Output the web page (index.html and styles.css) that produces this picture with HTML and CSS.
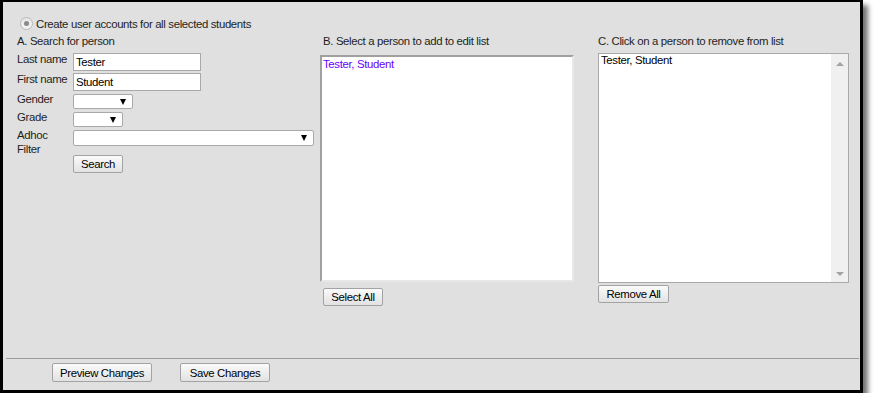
FILE: index.html
```html
<!DOCTYPE html>
<html>
<head>
<meta charset="utf-8">
<link rel="stylesheet" href="styles.css">
</head>
<body>
<div class="frame">
  <div class="main">
    <div class="radio-row">
      <span class="radio"><span class="dot"></span></span>
      <span class="radio-label">Create user accounts for all selected students</span>
    </div>
    <div class="cols">
      <div class="col col-a">
        <div class="heading">A. Search for person</div>
        <div class="frow r1"><span class="lbl lbl-in">Last name</span><span class="input">Tester</span></div>
        <div class="frow r2"><span class="lbl lbl-in">First name</span><span class="input">Student</span></div>
        <div class="frow r3"><span class="lbl lbl-sel">Gender</span><span class="select sel-gender"><span class="arrow"></span></span></div>
        <div class="frow r3"><span class="lbl lbl-sel">Grade</span><span class="select sel-grade"><span class="arrow"></span></span></div>
        <div class="frow r5"><span class="lbl lbl-sel">Adhoc<br>Filter</span><span class="select sel-adhoc"><span class="arrow"></span></span></div>
        <div class="frow r6"><span class="btn btn-search">Search</span></div>
      </div>
      <div class="col col-b">
        <div class="heading hb">B. Select a person to add to edit list</div>
        <div class="listbox-b"><div class="item-b">Tester, Student</div></div>
        <span class="btn btn-select">Select All</span>
      </div>
      <div class="col col-c">
        <div class="heading">C. Click on a person to remove from list</div>
        <div class="listbox-c">
          <div class="item-c">Tester, Student</div>
          <div class="scrollbar"><span class="up"></span><span class="down"></span></div>
        </div>
        <span class="btn btn-remove">Remove All</span>
      </div>
    </div>
  </div>
  <div class="footer">
    <span class="btn btn-preview">Preview Changes</span>
    <span class="btn btn-save">Save Changes</span>
  </div>
</div>
</body>
</html>
```

FILE: styles.css
```css
html, body {
  margin: 0;
  padding: 0;
  background: #ffffff;
}
body {
  font-family: "Liberation Sans", Arial, sans-serif;
  font-size: 11.4px;
  letter-spacing: -0.35px;
  color: #1e1e1e;
}
.frame {
  width: 863px;
  height: 393px;
  box-sizing: border-box;
  border: 3px solid #000;
  border-top-width: 2px;
  background: #e0e0e0;
  display: flex;
  flex-direction: column;
  box-shadow: 5px 5px 5px rgba(0, 0, 0, 0.55);
}
.main {
  height: 356px;
  box-sizing: border-box;
  padding-top: 14px;
}
.radio-row {
  display: flex;
  align-items: center;
  height: 15px;
  padding-left: 17px;
}
.radio {
  width: 11px;
  height: 11px;
  border-radius: 50%;
  border: 1px solid #b8b8b8;
  background: linear-gradient(#e6e6e6, #f4f4f4);
  display: flex;
  align-items: center;
  justify-content: center;
  margin-right: 3px;
}
.dot {
  width: 5px;
  height: 5px;
  border-radius: 50%;
  background: #8a8a8a;
}
.radio-label {
  line-height: 14px;
}
.cols {
  display: flex;
  margin-top: 3px;
}
.heading {
  line-height: 14px;
  height: 14px;
  white-space: nowrap;
}
.col-a {
  width: 317px;
  flex: none;
  padding-left: 14px;
  box-sizing: border-box;
}
.frow {
  display: flex;
  align-items: flex-start;
}
.r1 { height: 18px; margin-top: 5px; }
.r2 { height: 18px; margin-top: 2px; }
.r3 { height: 15px; margin-top: 3px; }
.r5 { height: 16px; margin-top: 3px; }
.r6 { height: 18px; margin-top: 9px; padding-left: 56px; }
.lbl {
  width: 56px;
  flex: none;
  line-height: 14px;
  white-space: nowrap;
}
.lbl-in { margin-top: -1px; }
.lbl-sel { margin-top: -2px; }
.input {
  width: 128px;
  height: 18px;
  box-sizing: border-box;
  border: 1px solid #a9a9a9;
  background: #fff;
  color: #000;
  padding-left: 2px;
  line-height: 16px;
}
.select {
  height: 15px;
  box-sizing: border-box;
  border: 1px solid #a9a9a9;
  border-radius: 2px;
  background: #fff;
  display: flex;
  align-items: center;
  justify-content: flex-end;
  padding-right: 6px;
}
.sel-gender { width: 60px; }
.sel-grade { width: 50px; }
.sel-adhoc { width: 241px; height: 16px; }
.arrow {
  width: 0;
  height: 0;
  border-left: 3px solid transparent;
  border-right: 3px solid transparent;
  border-top: 6px solid #000;
}
.btn {
  display: flex;
  align-items: center;
  justify-content: center;
  height: 18px;
  box-sizing: border-box;
  border: 1px solid #a3a3a3;
  border-radius: 2px;
  background: linear-gradient(#fafafa, #e2e2e2);
  color: #000;
  line-height: 14px;
  white-space: nowrap;
}
.btn-search { width: 50px; }
.col-b {
  width: 278px;
  flex: none;
  display: flex;
  flex-direction: column;
}
.hb { padding-left: 3px; }
.listbox-b {
  width: 254px;
  height: 227px;
  box-sizing: border-box;
  margin-top: 7px;
  background: #fff;
  border-top: 2px solid #a0a0a0;
  border-left: 2px solid #a0a0a0;
  border-right: 2px solid #e8e8e8;
  border-bottom: 2px solid #e8e8e8;
}
.item-b {
  color: #6a00ff;
  line-height: 14px;
  padding-left: 1px;
}
.btn-select {
  width: 60px;
  margin-top: 6px;
  margin-left: 3px;
}
.col-c {
  display: flex;
  flex-direction: column;
}
.listbox-c {
  width: 251px;
  height: 230px;
  box-sizing: border-box;
  margin-top: 5px;
  background: #fff;
  border: 1px solid #a9a9a9;
  display: flex;
  justify-content: space-between;
}
.item-c {
  color: #000;
  line-height: 13px;
  padding-left: 2px;
}
.scrollbar {
  width: 17px;
  background: #f0f0f0;
  display: flex;
  flex-direction: column;
  justify-content: space-between;
  align-items: center;
  padding: 8px 0 6px;
  box-sizing: border-box;
}
.up {
  width: 0;
  height: 0;
  border-left: 4px solid transparent;
  border-right: 4px solid transparent;
  border-bottom: 4px solid #a3a3a3;
}
.down {
  width: 0;
  height: 0;
  border-left: 4px solid transparent;
  border-right: 4px solid transparent;
  border-top: 4px solid #a3a3a3;
}
.btn-remove {
  width: 71px;
  margin-top: 2px;
}
.footer {
  flex: 1;
  margin: 0 1px 0 3px;
  border-top: 1px solid #9a9a9a;
  display: flex;
  align-items: flex-start;
  padding-top: 4px;
  padding-left: 46px;
}
.btn-preview { width: 100px; height: 19px; }
.btn-save { width: 90px; height: 19px; margin-left: 28px; }
```
